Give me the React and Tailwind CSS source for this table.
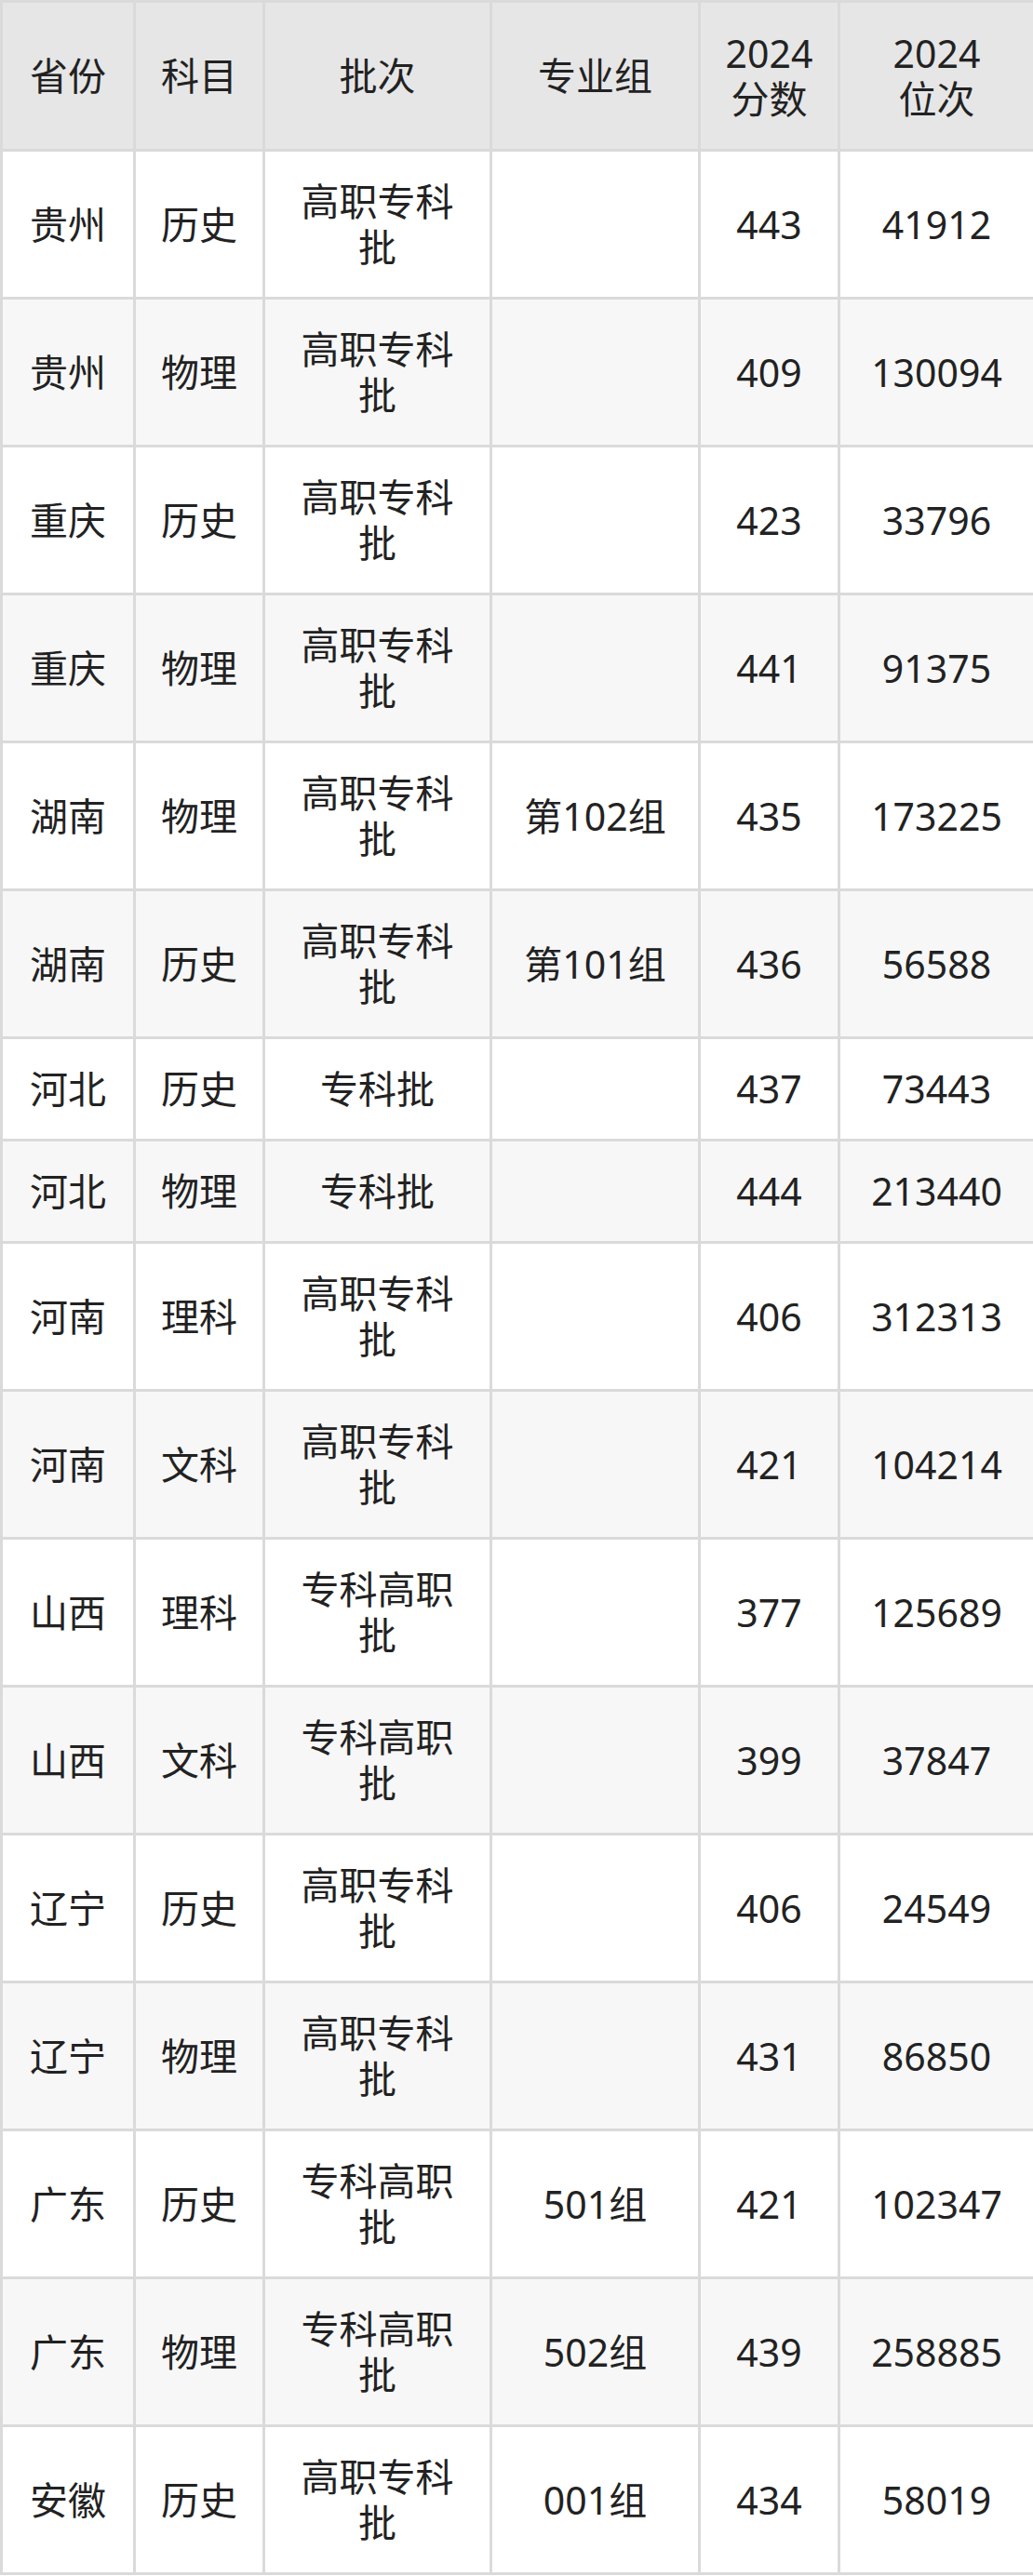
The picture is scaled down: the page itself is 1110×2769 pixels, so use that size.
import React from "react";

const rows = [
  ["贵州", "历史", "高职专科批", "", "443", "41912"],
  ["贵州", "物理", "高职专科批", "", "409", "130094"],
  ["重庆", "历史", "高职专科批", "", "423", "33796"],
  ["重庆", "物理", "高职专科批", "", "441", "91375"],
  ["湖南", "物理", "高职专科批", "第102组", "435", "173225"],
  ["湖南", "历史", "高职专科批", "第101组", "436", "56588"],
  ["河北", "历史", "专科批", "", "437", "73443"],
  ["河北", "物理", "专科批", "", "444", "213440"],
  ["河南", "理科", "高职专科批", "", "406", "312313"],
  ["河南", "文科", "高职专科批", "", "421", "104214"],
  ["山西", "理科", "专科高职批", "", "377", "125689"],
  ["山西", "文科", "专科高职批", "", "399", "37847"],
  ["辽宁", "历史", "高职专科批", "", "406", "24549"],
  ["辽宁", "物理", "高职专科批", "", "431", "86850"],
  ["广东", "历史", "专科高职批", "501组", "421", "102347"],
  ["广东", "物理", "专科高职批", "502组", "439", "258885"],
  ["安徽", "历史", "高职专科批", "001组", "434", "58019"],
];

const headers = ["省份", "科目", "批次", "专业组", "2024\n分数", "2024\n位次"];
const widths = ["w-[143px]", "w-[139px]", "w-[244px]", "w-[224px]", "w-[150px]", "w-[210px]"];

// cell text breaks like the source: 4 chars then the rest
const wrapBatch = (t) => (t.length > 4 ? t.slice(0, 4) + "\n" + t.slice(4) : t);

export default function App() {
  return (
    <div
      className="w-[1110px] bg-white text-[#222]"
      style={{ fontFamily: '"Noto Sans", "Noto Sans CJK SC", sans-serif' }}
    >
      <table className="w-[1110px] table-fixed border-collapse border-[3px] border-[#dadada] text-center text-[41px] leading-[49px]">
        <colgroup>
          {widths.map((w, i) => (
            <col key={i} className={w} />
          ))}
        </colgroup>
        <thead>
          <tr className="bg-[#e6e6e6] h-[160px]">
            {headers.map((h, i) => (
              <th
                key={i}
                className="border-[3px] border-[#dadada] font-normal whitespace-pre-line px-2"
              >
                {h}
              </th>
            ))}
          </tr>
        </thead>
        <tbody>
          {rows.map((r, ri) => (
            <tr key={ri} className={ri % 2 === 0 ? "bg-white" : "bg-[#f7f7f7]"}>
              {r.map((c, ci) => (
                <td
                  key={ci}
                  className="border-[3px] border-[#dadada] py-[29px] px-1 whitespace-pre-line"
                >
                  {ci === 2 ? wrapBatch(c) : c}
                </td>
              ))}
            </tr>
          ))}
        </tbody>
      </table>
    </div>
  );
}
